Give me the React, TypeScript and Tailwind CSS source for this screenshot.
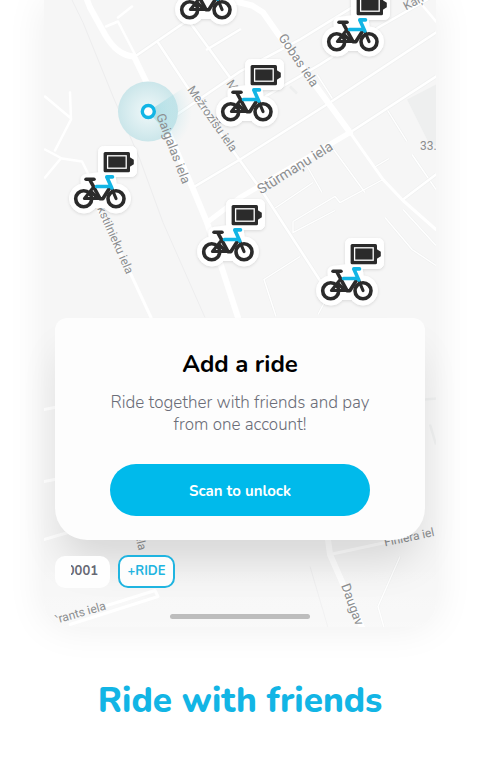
const markers = [
  { id: 'north', x: 106, y: -189 },
  { id: 'north-east', x: 253, y: -157 },
  { id: 'centre', x: 147, y: -87 },
  { id: 'west', x: 0, y: 0 },
  { id: 'middle', x: 128, y: 53 },
  { id: 'east', x: 247, y: 92 },
];

const streets = [
  { name: 'Gaigalas iela', x: 156, y: 116, angle: 69, size: 13 },
  { name: 'Mežrozīšu iela', x: 187, y: 90, angle: 55, size: 12 },
  { name: 'Gobas iela', x: 278, y: 38, angle: 56, size: 13 },
  { name: 'Stūrmaņu iela', x: 261, y: 195, angle: -32, size: 14 },
  { name: 'Kaņ', x: 406, y: 11, angle: -28, size: 12 },
  { name: 'kstilnieku iela', x: 97, y: 209, angle: 66, size: 12 },
  { name: '33.', x: 420, y: 150, angle: 0, size: 12 },
  { name: 'ela', x: 135, y: 536, angle: 76, size: 12 },
  { name: 'Finiera iel', x: 385, y: 547, angle: -12, size: 12 },
  { name: 'Daugav', x: 341, y: 586, angle: 70, size: 13 },
  { name: '‵rants iela', x: 57, y: 624, angle: -16, size: 12 },
];

function BikeMarker({ x, y }: { x: number; y: number }) {
  return (
    <g transform={`translate(${x} ${y})`}>
      <g fill="#fff" stroke="#fff" strokeLinejoin="round" filter="url(#sticker)">
        <circle cx="84" cy="199" r="14.500" />
        <circle cx="116" cy="199" r="14.500" />
        <rect x="98.500" y="147" width="38" height="30" rx="5" />
        <path d="M86 180 L110 177 L114 203 L88 203 Z" strokeWidth="11" />
      </g>
      <g fill="none" stroke="#2b2b2b" strokeLinecap="round" strokeLinejoin="round">
        <circle cx="83.700" cy="199.300" r="8" strokeWidth="3.600" />
        <circle cx="116" cy="199.300" r="8" strokeWidth="3.600" />
        <path d="M86 179.700 H94" strokeWidth="3.500" />
        <path d="M90.200 181 L100 199.200 H102.800 L109 189.500" strokeWidth="3.600" />
        <path d="M92.500 189 L84.500 199 H100 M91 192 L97 198" strokeWidth="3.200" />
        <path d="M112 189.500 L116 199" strokeWidth="3.200" />
        <path d="M112.500 177.400 H106.800 L111.800 188.500 M96.500 187 H110.500" stroke="#12b5e5" strokeWidth="3.600" />
      </g>
      <rect x="103.600" y="152.400" width="26.400" height="20.300" rx="1.500" fill="#2b2b2b" />
      <path d="M129.500 157.500 L133.800 160.300 V164.700 L129.500 167.500 Z" fill="#2b2b2b" />
      <rect x="107.600" y="156.300" width="18.600" height="12.400" fill="none" stroke="#fff" strokeWidth="1.300" />
    </g>
  );
}

function CityMap() {
  return (
    <svg
      className="absolute inset-0 h-full w-full rounded-b-3xl"
      viewBox="44 0 392 628"
      preserveAspectRatio="xMidYMid slice"
      role="img"
      aria-label="Map of nearby bikes"
    >
      <defs>
        <filter id="sticker" x="-20%" y="-20%" width="140%" height="150%">
          <feDropShadow dx="0" dy="1" stdDeviation="1.500" floodColor="#000" floodOpacity="0.12" />
        </filter>
        <radialGradient id="halo">
          <stop offset="0" stopColor="#f0f8f9" />
          <stop offset="1" stopColor="#cbe6ea" />
        </radialGradient>
        <radialGradient id="beam" gradientUnits="userSpaceOnUse" cx="148" cy="112" r="44">
          <stop offset="0" stopColor="#74c9d5" stopOpacity="0.6" />
          <stop offset="1" stopColor="#a5dde6" stopOpacity="0" />
        </radialGradient>
        <linearGradient id="fade" x1="0" x2="0" y1="0" y2="1">
          <stop offset="0" stopColor="#fff" stopOpacity="0" />
          <stop offset="1" stopColor="#fff" stopOpacity="0.300" />
        </linearGradient>
      </defs>
      <rect x="44" y="0" width="392" height="628" fill="#f6f6f6" />
      <path d="M407 100 L436 85 V147 L428 142 Z" fill="#eeefef" />

      {/* footpaths and parcel borders */}
      <g fill="none" stroke="#ededee" strokeWidth="1">
        <path d="M62 -20 L83 23 L113 97 L140 160 L163 223 L205 318" />
        <path d="M310 567 L328 628" />
      </g>
      <g fill="none" stroke="#eeefef" strokeWidth="2.500">
        <path d="M387 110 L407 142 M317 75 L333 100 M290 87 L297 94" />
        <path d="M273 210 L313 183 M293 222 L335 197 L340 203 L383 180 M293 222 V233 L335 211 M305 163 L322 193 M330 145 L365 193 M374 168 L389 159 M403 210 L436 246 M385 218 L412 250 L436 266 M300 257 L264 280 L276 317 M318 315 L326 300 M412 155 L436 190" />
        <path d="M425 400 L436 399 M430 425 L436 445 M400 557 L378 607 L384 628" />
      </g>
      <g fill="none" stroke="#fff" strokeWidth="1.400">
        <path d="M387 110 L407 142 M317 75 L333 100 M273 210 L313 183 M293 222 L335 197 L340 203 L383 180 M293 222 V233 L335 211 M305 163 L322 193 M330 145 L365 193 M374 168 L389 159 M403 210 L436 246 M385 218 L412 250 L436 266 M300 257 L264 280 L276 317 M318 315 L326 300 M412 155 L436 190" />
        <path d="M400 557 L378 607 L384 628" />
      </g>

      {/* streets */}
      <g fill="none" stroke="#f0f1f1" strokeWidth="4" strokeLinejoin="round">
        <path d="M135 57 L180 26 L220 0 M158 43 L187 87 L240 161 L263 193 L320 281 M190 23 L230 78 M207 50 L240 30" />
        <path d="M177 115 L240 72 L300 40 L365 0 M260 100 L320 65 L380 27 L436 -5 M193 188 L240 160 L330 103 L436 33 M350 133 L436 77 M403 200 L436 175" />
      </g>
      <g fill="none" stroke="#fff" strokeLinejoin="round" strokeLinecap="round">
        <path d="M85 -5 L90 8 L105 35 Q117 56 134 57" strokeWidth="6" />
        <path d="M134 57 L149 88 L192 187 L207 223 L238 318" strokeWidth="6" />
        <path d="M135 57 L180 26 L220 0 M106 27 L118 22 L135 55 M118 18 L132 7" strokeWidth="2.500" />
        <path d="M158 43 L187 87 L240 161 L263 193 L320 281 M190 23 L230 78 M207 50 L240 30" strokeWidth="2.500" />
        <path d="M177 115 L240 72 L300 40 L365 0 M260 100 L320 65 L380 27 L436 -5 M193 188 L240 160 L330 103 L436 33 M350 133 L436 77 M403 200 L436 175 M420 3 L436 22" strokeWidth="2.500" />
        <path d="M207 223 L240 198 L350 133" strokeWidth="5" />
        <path d="M236 2 L252 6 L263 13 L277 33 L317 88 L350 133" strokeWidth="6" />
        <path d="M350 133 L383 180 L403 201 L436 230" strokeWidth="3" />
        <path d="M45 97 L70 118 M70 93 L71 120 L55 151 M45 150 L62 159 L82 162 L88 174 M60 160 L45 178" strokeWidth="2.500" />
        <path d="M88 190 L131 275 L151 318" strokeWidth="3" />
        <path d="M44 410 L60 407 M44 482 L60 479 M44 540 L68 533" strokeWidth="3" />
        <path d="M328 540 L330 555 L363 630" strokeWidth="6" />
        <path d="M330 555 L390 542" strokeWidth="3" />
        <path d="M107 606 L155 591 L158 597 L70 625" strokeWidth="3" />
      </g>
      <rect x="44" y="560" width="392" height="68" fill="url(#fade)" />

      <circle cx="148" cy="112" r="30" fill="url(#halo)" />
      <path d="M148 112 L190 84 L198 112 L180 148 Z" fill="url(#beam)" />

      <g fill="#8c8e90" className="font-['Roboto','Noto_Sans',sans-serif]">
        {streets.map((s) => (
          <text key={s.name} fontSize={s.size} transform={`translate(${s.x} ${s.y}) rotate(${s.angle})`}>
            {s.name}
          </text>
        ))}
        <text fontSize="12" transform="translate(226 84) rotate(55)">
          M
        </text>
      </g>

      <circle cx="148.300" cy="112" r="6" fill="#fff" stroke="#12b5e5" strokeWidth="3.400" />
      {markers.map((m) => (
        <BikeMarker key={m.id} x={m.x} y={m.y} />
      ))}
    </svg>
  );
}

export default function App() {
  return (
    <main className="min-h-screen overflow-hidden bg-white font-['Nunito','Lato','Open_Sans',sans-serif]">
      <section className="relative mx-11 rounded-b-3xl px-[11px] pt-[318px] pb-2 shadow-[0_0_40px_rgba(0,0,0,0.07)]">
        <CityMap />

        <div className="relative rounded-t-xl rounded-b-[32px] bg-[#fdfdfd] px-6 pt-[30px] pb-6 text-center shadow-[0_28px_40px_-8px_rgba(0,0,0,0.13)]">
          <h2 className="text-2xl leading-8 font-bold text-black">Add a ride</h2>
          <p className="mx-auto mt-3 max-w-[272px] text-[17px] leading-[22px] font-light text-[#6b6d78]">
            Ride together with friends and pay from one account!
          </p>
          <button
            type="button"
            className="mt-7 h-[52px] w-full max-w-[260px] rounded-full bg-[#00baeb] pt-0.5 text-[15px] font-bold text-white"
          >
            Scan to unlock
          </button>
        </div>

        <div className="relative mt-[15px] flex items-center gap-2">
          <button
            type="button"
            aria-label="0001"
            className="flex h-8 w-[55px] items-center justify-end rounded-[10px] bg-[#fefefe] pr-3 text-[13px] font-bold text-[#666873]"
          >
            <span className="flex w-[27px] justify-end overflow-hidden">0001</span>
          </button>
          <button
            type="button"
            className="h-[33px] w-[57px] rounded-[10px] border-2 border-[#1fb4e0] bg-[#fdfdfd] text-[13px] font-bold text-[#1fb4e0]"
          >
            +RIDE
          </button>
        </div>

        <div className="relative mx-auto mt-[26px] h-[5px] w-[140px] rounded-full bg-[#bdbdbd]" />
      </section>

      <h1 className="mt-[52px] text-center text-[35px] leading-[44px] font-extrabold text-[#12b5e5]">Ride with friends</h1>
    </main>
  );
}
